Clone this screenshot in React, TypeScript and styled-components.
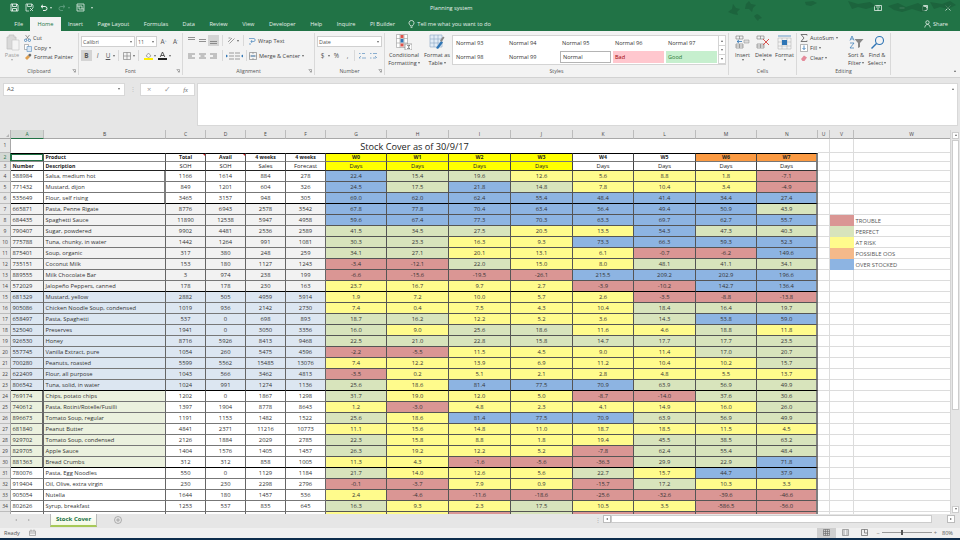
import React from "react";
import styled, { createGlobalStyle } from "styled-components";

const Global = createGlobalStyle`
  html, body { margin: 0; padding: 0; background: #e6e6e6; overflow: hidden; }
  body { font-family: "Open Sans", "Noto Sans", sans-serif; color: #333; }
  * { box-sizing: border-box; }
`;

const Page = styled.div`
  width: 960px; height: 540px; display: flex; flex-direction: column; overflow: hidden;
`;

/* ---------- title bar ---------- */
const TitleBar = styled.header`
  position: relative; height: 16px; background: #217346; color: #e8f2ec;
  display: grid; grid-template-columns: 430px 1fr auto; align-items: center;
  font-size: 5.6px;
`;
const Quick = styled.div`display: flex; align-items: center; gap: 6px; padding-left: 10px;`;
const WinBtns = styled.div`display: flex; align-items: center; gap: 17px; padding-right: 9px;`;
const Leaves = styled.svg`position: absolute; left: 720px; top: 0;`;
const Ic = styled.svg`display: block; flex: none;`;
const Caret = styled.span<{ $c?: string }>`
  display: inline-block; flex: none; width: 0; height: 0;
  border-left: 1.5px solid transparent; border-right: 1.5px solid transparent;
  border-top: 2px solid ${p => p.$c || "#666"};
`;

/* ---------- tabs ---------- */
const TabBar = styled.nav`
  height: 16px; background: #217346; color: #e4efe9; display: flex; align-items: stretch;
  padding-left: 7px; font-size: 5.6px;
`;
const Tab = styled.div<{ $on?: boolean }>`
  display: flex; align-items: center; padding: 0 7.25px; white-space: nowrap;
  ${p => p.$on ? "background:#f3f3f3;color:#217346;margin:1px 0 0 0;" : ""}
`;
const TellMe = styled.div`display: flex; align-items: center; gap: 2px; padding-left: 6px; white-space: nowrap;`;
const Share = styled.div`margin-left: auto; display: flex; align-items: center; gap: 2px; padding-right: 12px;`;

/* ---------- ribbon ---------- */
const Ribbon = styled.div`
  height: 47px; background: #f3f3f3; border-bottom: 1px solid #d2d2d2; display: flex; padding-top: 2px;
  font-size: 5.6px; color: #444;
`;
const Group = styled.section<{ $w: number }>`
  width: ${p => p.$w}px; flex: none; height: 42px; display: flex; flex-direction: column;
  border-right: 1px solid #d9d9d9;
`;
const GroupBody = styled.div<{ $pad?: number }>`
  flex: 1; display: flex; align-items: flex-start; min-height: 0; padding-left: ${p => p.$pad ?? 0}px;
`;
const GroupFoot = styled.div`
  height: 9px; display: grid; grid-template-columns: 8px 1fr 8px; align-items: center; justify-items: center;
  font-size: 5.2px; color: #555;
`;
const Launcher = () => (
  <Ic width="4" height="4" viewBox="0 0 4 4"><path d="M.5.5h3v3M1 1l2 2M3 1.800V3H1.800" fill="none" stroke="#888" strokeWidth=".6" /></Ic>
);
const Stack = styled.div<{ $gap?: number; $pad?: string }>`
  display: flex; flex-direction: column; gap: ${p => p.$gap ?? 2}px; padding: ${p => p.$pad || "0"};
`;
const Line = styled.div<{ $gap?: number }>`
  display: flex; align-items: center; gap: ${p => p.$gap ?? 2}px; white-space: nowrap;
`;
const Big = styled.div<{ $w: number; $fade?: boolean; $left?: number }>`
  width: ${p => p.$w}px; flex: none; display: flex; flex-direction: column; align-items: center;
  margin-left: ${p => p.$left ?? 0}px;
  line-height: 8px; text-align: center; white-space: nowrap; color: ${p => p.$fade ? "#999" : "#444"};
`;
const BigIcon = styled.div<{ $h: number }>`
  height: ${p => p.$h}px; display: flex; align-items: center; justify-content: center;
`;
const Select = styled.div<{ $w: number }>`
  width: ${p => p.$w}px; height: 11px; background: #fff; border: 1px solid #d0d0d0; display: flex;
  align-items: center; justify-content: space-between; padding: 0 2px 0 1px; color: #555; font-size: 5.4px;
`;
const ToolBtn = styled.div<{ $on?: boolean; $w?: number }>`
  width: ${p => p.$w ?? 10}px; height: 11px; flex: none; display: flex; align-items: center; justify-content: center;
  background: ${p => p.$on ? "#d4d4d4" : "transparent"}; font-size: 6.4px; color: #555;
`;
const Mini = styled.sup`font-size: 3.5px; color: #2f75b5;`;
const VSep = styled.div<{ $h?: number }>`width: 1px; height: ${p => p.$h ?? 11}px; background: #d9d9d9; flex: none;`;
const Gallery = styled.div`
  width: 274px; height: 30px; margin: 2px 0 0 0; flex: none; background: #fff; border: 1px solid #d4d4d4;
  display: grid; grid-template-columns: repeat(5, 53px) 1fr; grid-template-rows: 1fr 1fr; font-size: 5.6px; color: #333;
`;
const Style = styled.div<{ $kind?: string }>`
  margin: 1px 1px; display: flex; align-items: center; padding-left: 2px; white-space: nowrap;
  ${p => p.$kind === "bad" ? "background:#ffc7ce;color:#9c0006;" : ""}
  ${p => p.$kind === "good" ? "background:#c6efce;color:#2f7a34;" : ""}
  ${p => p.$kind === "sel" ? "border:1px solid #b4b4b4;" : ""}
`;
const GalleryScroll = styled.div`
  grid-column: 6; grid-row: 1 / 3; display: flex; flex-direction: column; border-left: 1px solid #d4d4d4;
`;
const ScrollCell = styled.div`flex: 1; display: flex; align-items: center; justify-content: center; border-bottom: 1px solid #d4d4d4;`;
const Collapse = styled.div`margin-left: auto; align-self: flex-end; padding: 0 4px 3px 0;`;

/* ---------- formula bar ---------- */
const FormulaBar = styled.div`
  height: 52px; background: #e6e6e6; display: flex; align-items: flex-start; padding: 5px 2px 0 3px; flex: none;
`;
const NameBox = styled.div`
  width: 122px; height: 13px; background: #fff; border: 1px solid #d8d8d8; display: flex; align-items: center;
  justify-content: space-between; padding: 0 4px 0 3px; font-size: 5.8px; color: #555;
`;
const Dots = styled.div`width: 15px; height: 13px; display: flex; align-items: center; justify-content: center; color:#bbb; font-size: 6px;`;
const FxBox = styled.div`
  width: 55px; height: 13px; background: #fff; border: 1px solid #d8d8d8; display: flex; align-items: center;
  justify-content: space-between; padding: 0 6px; color: #999; font-size: 7.5px;
`;
const Fx = styled.i`color: #666; font-size: 6.5px; font-family: "Liberation Serif", serif;`;
const Formula = styled.div`
  flex: 1; height: 43px; margin-left: 2px; background: #fff; border: 1px solid #d8d8d8; display: flex;
  justify-content: flex-end; padding: 4px 3px;
`;

/* ---------- sheet ---------- */
const SheetArea = styled.main`height: 384px; flex: none; display: flex; background: #fff;`;
const Grid = styled.div`
  width: 950px; height: 384px; overflow: hidden; display: grid; flex: none;
  grid-template-columns: 11px 33px 122px 40px 40px 40px 40px 61px 62px 62px 62px 61px 62px 61px 61px 12px 24px 116px;
  grid-template-rows: 9px 14px 9px 9px repeat(32, 11px);
  font-size: 5.8px; color: #333;
`;
const Corner = styled.div`background: #e6e6e6; border-right: 1px solid #b4b4b4; border-bottom: 1px solid #a8a8a8; display:flex; align-items:flex-end; justify-content:flex-end; padding: 1px;`;
const ColHead = styled.div<{ $on?: boolean }>`
  background: ${p => p.$on ? "#d3d8d4" : "#e6e6e6"}; color: ${p => p.$on ? "#217346" : "#444"};
  border-right: 1px solid #bcbcbc; border-bottom: ${p => p.$on ? "1.5px solid #217346" : "1px solid #a8a8a8"};
  display: flex; align-items: center; justify-content: center; font-size: 5px;
`;
const RowHead = styled.div<{ $on?: boolean }>`
  background: ${p => p.$on ? "#d3d8d4" : "#e6e6e6"}; color: ${p => p.$on ? "#217346" : "#444"};
  border-right: ${p => p.$on ? "1px solid #217346" : "1px solid #a8a8a8"}; border-bottom: 1px solid #bcbcbc;
  display: flex; align-items: center; justify-content: center; font-size: 5px;
`;
const TitleCell = styled.div`
  grid-column: span 14; background: #fff; display: flex; align-items: center; justify-content: center;
  font-size: 9.2px; color: #222; padding-top: 1px;
`;
const Blank = styled.div`background: #fff; border-right: 1px solid #dcdcdc; border-bottom: 1px solid #dcdcdc;`;
const HeadCell = styled.div<{ $top?: boolean; $bold?: boolean; $left?: boolean; $note?: boolean; $active?: boolean; $fill?: string }>`
  position: relative; background: ${p => p.$fill || "#fff"}; overflow: hidden; white-space: nowrap;
  display: flex; align-items: center; justify-content: ${p => p.$left ? "flex-start" : "center"};
  padding-left: ${p => p.$left ? "1.5px" : "0"}; font-weight: ${p => p.$bold ? 700 : 400};
  font-size: ${p => p.$bold ? "5.2px" : "5.8px"};
  color: #222; border-right: 1px solid #555;
  ${p => p.$top ? "border-top: 1px solid #000; border-bottom: 1px solid #888;" : "border-bottom: 1px solid #222;"}
  ${p => p.$active ? "box-shadow: inset 0 0 0 1px #217346;" : ""}
  ${p => p.$note ? "&::after{content:'';position:absolute;right:0;top:0;border-top:2px solid #d22;border-left:2px solid transparent;}" : ""}
`;
const Fill = (row: number, col: "id" | "num") => {
  if (row >= 7 && row <= 14) return "#f2f2f2";
  if (row >= 15 && row <= 23) return "#dce6f1";
  if (row >= 24 && row <= 30 && col === "id") return "#ebf1de";
  return "#fff";
};
const ends = (row: number) => [6, 14, 23, 30].includes(row);
const DataCell = styled.div<{ $fill: string; $end: boolean; $right?: string; $left?: boolean }>`
  background: ${p => p.$fill}; overflow: hidden; white-space: nowrap; display: flex; align-items: center;
  justify-content: ${p => p.$left ? "flex-start" : "center"}; padding-left: ${p => p.$left ? "1.5px" : "0"};
  border-right: ${p => p.$right || "1px solid #666"};
  border-bottom: 1px solid ${p => p.$end ? "#000" : "#777"};
`;
const tones: Record<string, string> = { R: "#da9694", G: "#d8e4bc", Y: "#fffb8c", B: "#8db4e2" };
const CoverCell = styled.div<{ $tone: string; $end: boolean; $last?: boolean }>`
  background: ${p => tones[p.$tone]}; display: flex; align-items: center; justify-content: center; white-space: nowrap;
  border-right: ${p => p.$last ? "2px solid #7f7f7f" : "1px solid #555"};
  border-bottom: 1px solid ${p => p.$end ? "#000" : "#555"};
`;
const WeekHead = styled.div<{ $fill: string; $top?: boolean; $last?: boolean }>`
  background: ${p => p.$fill}; display: flex; align-items: center; justify-content: center; color: #222;
  font-weight: ${p => p.$top ? 700 : 400};
  font-size: ${p => p.$top ? "5.2px" : "5.8px"};
  border-right: ${p => p.$last ? "2px solid #7f7f7f" : "1px solid #444"};
  ${p => p.$top ? "border-top: 1px solid #000; border-bottom: 1.5px solid #777;" : "border-bottom: 1px solid #333;"}
`;
const Swatch = styled(Blank)<{ $c: string }>`background: ${p => p.$c}; border-right: 0; border-bottom: 0;`;
const LegendLabel = styled(Blank)`display: flex; align-items: flex-end; padding-left: 1.5px; color: #555; white-space: nowrap;`;

/* ---------- v scroll ---------- */
const VScroll = styled.div`width: 10px; flex: none; background: #e6e6e6; display: flex; flex-direction: column; padding: 2px 1px 1px; border-left: 1px solid #d4d4d4;`;
const VArrow = styled.div`height: 7px; background: #fff; border: 1px solid #ccc; display: flex; align-items: center; justify-content: center; flex: none;`;
const VThumb = styled.div`height: 270px; background: #fff; border: 1px solid #ccc; margin-top: 1px; flex: none;`;
const Spacer = styled.div`flex: 1;`;
const UpArrow = styled(Caret)`transform: rotate(180deg);`;

/* ---------- sheet tabs ---------- */
const TabsBar = styled.div`
  height: 14.5px; background: #e6e6e6; flex: none; display: flex; align-items: flex-start; font-size: 6.4px;
`;
const NavArrows = styled.div`width: 50px; display: flex; justify-content: center; gap: 11px; align-items: center; height: 13px; padding-right: 6px; color: #aaa;`;
const SheetTab = styled.div`
  width: 47px; height: 13px; color: #217346; font-weight: 700; font-size: 6px; margin-top: 0;
  display: flex; align-items: center; justify-content: center; border-left: 1px solid #bbb; border-right: 1px solid #bbb;
  border-bottom: 2px solid #a7c957; background: linear-gradient(#fff, #f4f9e4);
`;
const Add = styled.div`width: 42px; height: 13px; display: flex; align-items: center; justify-content: center;`;
const Grip = styled.div`margin-left: auto; color: #aaa; width: 10px; height: 13px; line-height: 13px; font-size: 6px; text-align: center;`;
const HScroll = styled.div`
  width: 352px; height: 9px; margin: 1px 5px 0 0; display: flex; background: #e6e6e6;
`;
const HBtn = styled.div`width: 8px; height: 8px; background: #fff; border: 1px solid #bbb; display: flex; align-items: center; justify-content: center;`;
const HThumb = styled.div`flex: 1; height: 8px; background: #fff; border: 1px solid #ccc; margin-right: 15px;`;
const Sideways = styled(Caret)<{ $flip?: boolean }>`transform: rotate(${p => p.$flip ? 90 : -90}deg);`;

/* ---------- status ---------- */
const Status = styled.footer`
  height: 9.5px; background: #f0f0f0; flex: none; display: flex; align-items: center; padding-left: 4px; font-size: 5.6px; color: #555; gap: 9px;
`;
const ViewBtn = styled.div<{ $on?: boolean }>`
  width: 19px; height: 9.5px; display: flex; align-items: center; justify-content: center; background: ${p => p.$on ? "#cfcfcf" : "transparent"};
`;
const Views = styled.div`margin-left: auto; display: flex; align-items: center;`;
const ZoomBox = styled.div`display: flex; align-items: center; gap: 2px; margin: 0 5px 0 3px; color: #777;`;
const Track = styled.div`position: relative; width: 50px; height: 1px; background: #999;`;
const Knob = styled.div`position: absolute; left: 19px; top: -2px; width: 2px; height: 5px; background: #555;`;
const Percent = styled.span`padding-right: 7px;`;
const Task = styled.div`height: 2.5px; background: #0d2c4c; flex: none;`;

/* ---------- data ---------- */
const data = `588984|Salsa, medium hot|1166|1614|884|278|22.4 15.4 19.6 12.6 5.6 8.8 1.8 -7.1|BGGYYYYR
771432|Mustard, dijon|849|1201|604|326|24.5 17.5 21.8 14.8 7.8 10.4 3.4 -4.9|BGBGYYYR
535649|Flour, self rising|3465|3157|948|305|69.0 62.0 62.4 55.4 48.4 41.4 34.4 27.4|BBBBBBBB
665871|Pasta, Penne Rigate|8776|6943|2578|3542|67.8 77.8 70.4 63.4 56.4 49.4 50.9 43.9|BBBBBBBG
684435|Spaghetti Sauce|11890|12538|5947|4958|59.6 67.4 77.3 70.3 63.3 69.7 62.7 55.7|BBBBBBBB
790407|Sugar, powdered|9902|4481|2536|2589|41.5 34.5 27.5 20.5 13.5 54.3 47.3 40.3|GGGYYBGG
775788|Tuna, chunky, in water|1442|1264|991|1081|30.3 23.3 16.3 9.3 73.3 66.3 59.3 52.3|GGYYBBBB
875401|Soup, organic|317|380|248|259|34.1 27.1 20.1 13.1 6.1 -0.7 -6.2 149.6|GGYYYRRB
735151|Coconut Milk|153|180|1127|1243|-3.4 -12.1 22.0 15.0 8.0 48.1 41.1 34.1|RRGYYGGG
889555|Milk Chocolate Bar|3|974|238|199|-6.6 -15.6 -19.5 -26.1 215.5 209.2 202.9 196.6|RRRRBBBB
572029|Jalopeño Peppers, canned|178|178|230|163|23.7 16.7 9.7 2.7 -3.9 -10.2 142.7 136.4|YYYYRRBB
681329|Mustard, yellow|2882|505|4959|5914|1.9 7.2 10.0 5.7 2.6 -3.5 -8.8 -13.8|YYYYYRRR
905086|Chicken Noodle Soup, condensed|1019|936|2142|2730|7.4 0.4 7.5 4.3 10.4 18.4 16.4 19.7|YYYYYGGG
658497|Pasta, Spaghetti|537|0|698|893|18.7 16.2 12.2 5.2 3.6 14.3 53.8 59.0|GGYYYGBB
525040|Preserves|1941|0|3050|3356|16.0 9.0 25.6 18.6 11.6 4.6 18.8 11.8|GYGGYYGY
926530|Honey|8716|5926|8413|9468|22.5 21.0 22.8 15.8 14.7 17.7 17.7 23.5|GGGGGGGG
557745|Vanilla Extract, pure|1054|260|5475|4596|-2.2 -5.5 11.5 4.5 9.0 11.4 17.0 20.7|RRYYYYGG
700280|Peanuts, roasted|5599|5562|15485|13076|7.4 12.2 13.9 6.9 11.2 10.4 10.2 15.7|YYYYYYYG
622409|Flour, all purpose|1043|566|3462|4813|-3.5 0.2 5.1 2.1 2.8 4.8 5.5 13.7|RYYYYYYY
806542|Tuna, solid, in water|1024|991|1274|1136|25.6 18.6 81.4 77.5 70.9 63.9 56.9 49.9|GYBBBGGG
769174|Chips, potato chips|1202|0|1867|1298|31.7 19.0 12.0 5.0 -8.7 -14.0 37.6 30.6|GYYYRRGG
740612|Pasta, Rotini/Rotelle/Fusilli|1397|1904|8778|8643|1.2 -3.0 4.8 2.3 4.1 14.9 16.0 26.0|YRYYYYYG
896673|Tomato Soup, regular|1191|1153|1482|1522|25.6 18.6 81.4 77.5 70.9 63.9 56.9 49.9|GYBBBGGG
681840|Peanut Butter|4841|2371|11216|10773|11.1 15.6 14.8 11.0 18.7 18.5 11.5 4.5|YYYYYYYY
929702|Tomato Soup, condensed|2126|1884|2029|2785|22.3 15.8 8.8 1.8 19.4 45.5 38.5 63.2|GYYYYGGG
829705|Apple Sauce|1404|1576|1405|1457|26.3 19.2 12.2 5.2 -7.8 62.4 55.4 48.4|GYYYRGGG
881363|Bread Crumbs|312|312|858|1005|11.3 4.3 -1.6 -5.6 -36.3 29.9 22.9 71.8|YYRRRGGB
780076|Pasta, Egg Noodles|550|0|1129|1184|21.7 14.0 12.6 5.6 22.7 15.7 44.7 37.9|GYYYGYBB
919404|Oil, Olive, extra virgin|230|230|2298|2796|-0.1 -3.7 7.9 0.9 -15.7 17.2 10.3 3.3|RRYYRGYY
905054|Nutella|1644|180|1457|536|2.4 -4.6 -11.6 -18.6 -25.6 -32.6 -39.6 -46.6|YRRRRRRR
802626|Syrup, breakfast|1253|537|835|645|16.3 9.3 2.3 17.5 10.5 3.5 -586.5 -56.0|GYYGYYRR
||||||        |YYRGRRRR`.split("\n").map(l => l.split("|"));

const legend: Record<number, [string, string]> = {
  8: ["#da9694", "TROUBLE"], 9: ["#d8e4bc", "PERFECT"], 10: ["#fffb8c", "AT RISK"],
  11: ["#f4b98a", "POSSIBLE OOS"], 12: ["#8db4e2", "OVER STOCKED"],
};
const cols = ["A", "B", "C", "D", "E", "F", "G", "H", "I", "J", "K", "L", "M", "N", "U", "V", "W"];
const weeks = ["W0", "W1", "W2", "W3", "W4", "W5", "W6", "W7"];
const weekFill = (i: number) => (i < 4 ? "#ffff00" : i < 6 ? "#ffffff" : "#fb9a42");
const dayFill = (i: number) => (i < 4 ? "#ffff00" : "#ffffff");

function Trail() {
  return <><Blank /><Blank /><Blank /></>;
}

function SheetRows() {
  return (
    <>
      {data.map((d, i) => {
        const row = i + 4;
        const end = ends(row);
        const vals = d[6].trim() ? d[6].split(" ") : Array(8).fill("");
        const lg = legend[row];
        return (
          <React.Fragment key={row}>
            <RowHead>{row < 35 ? row : ""}</RowHead>
            <DataCell $left $fill={Fill(row, "id")} $end={end} $right={row >= 24 && row <= 30 ? "2px solid #666" : undefined}>{d[0]}</DataCell>
            <DataCell $left $fill={Fill(row, "id")} $end={end} $right={row <= 6 ? "2px solid #7f7f7f" : undefined}>{d[1]}</DataCell>
            {[2, 3, 4, 5].map(k => (
              <DataCell key={k} $fill={Fill(row, "num")} $end={end}>{d[k]}</DataCell>
            ))}
            {vals.map((v: string, k: number) => (
              <CoverCell key={k} $tone={d[7][k]} $end={end} $last={k === 7}>{v}</CoverCell>
            ))}
            <Blank />
            {lg ? <><Swatch $c={lg[0]} /><LegendLabel>{lg[1]}</LegendLabel></> : <><Blank /><Blank /></>}
          </React.Fragment>
        );
      })}
    </>
  );
}

export default function App() {
  return (
    <Page>
      <Global />
      <TitleBar>
        <Quick>
          <Ic width="9" height="9" viewBox="0 0 9 9"><path d="M1 1h6l1 1v6H1z M2.500 1v2.500h4V1 M2.500 8V5.500h4V8" fill="none" stroke="#fff" strokeWidth=".8" /></Ic>
          <Ic width="9" height="9" viewBox="0 0 9 9"><path d="M1 1h6l1 1v3M1 1v7h3M2.500 1v2.500h4V1M5 5l3 3M8 5L5 8" fill="none" stroke="#dfeee6" strokeWidth=".8" /></Ic>
          <Line $gap={2}>
            <Ic width="8" height="8" viewBox="0 0 8 8"><path d="M1 2.500h4a2 2 0 0 1 0 4H3M1 2.500L3 .8M1 2.500L3 4.200" fill="none" stroke="#fff" strokeWidth=".9" /></Ic>
            <Caret $c="#cfe3d8" />
          </Line>
          <Line $gap={2}>
            <Ic width="8" height="8" viewBox="0 0 8 8"><path d="M7 2.500H3a2 2 0 0 0 0 4h2M7 2.500L5 .8M7 2.500L5 4.200" fill="none" stroke="#5e9c7d" strokeWidth=".9" /></Ic>
            <Caret $c="#5e9c7d" />
          </Line>
          <Ic width="9" height="9" viewBox="0 0 9 9"><path d="M1 1h7v7H1z M3 3h3v3H3z M1 3h2M6 6h2" fill="none" stroke="#e0eee6" strokeWidth=".8" /></Ic>
          <Caret $c="#cfe3d8" />
        </Quick>
        <span>Planning system</span>
        <WinBtns>
          <Ic width="8" height="6" viewBox="0 0 8 6"><path d="M.5.5h7v5h-7zM4 .5v5M2 2h1M5 2h1" fill="none" stroke="#fff" strokeWidth=".7" /></Ic>
          <Ic width="6" height="6" viewBox="0 0 6 6"><path d="M.5 3h5" stroke="#fff" strokeWidth=".7" /></Ic>
          <Ic width="6" height="6" viewBox="0 0 6 6"><path d="M.5 1.500h4v4h-4zM1.500 1.500V.5h4v4h-1" fill="none" stroke="#fff" strokeWidth=".7" /></Ic>
          <Ic width="6" height="6" viewBox="0 0 6 6"><path d="M.5.5l5 5M5.500.5l-5 5" stroke="#fff" strokeWidth=".7" /></Ic>
        </WinBtns>
        <Leaves width="240" height="32" viewBox="0 0 240 32" fill="#1b5f3a" opacity=".75">
          <path d="M8 12l4-3 1-5 3 4 4 1-3 3 1 3-5-1z" />
          <path d="M26 4l3-3 2 3 5 1-3 3-1 4-3-3-4 0z" />
          <path d="M34 16l3-2 2 1 3 3-3 1-1 2-2-2z" />
          <path d="M85 2l8-1 4 2-6 3-5-1z" />
          <path d="M128 1l10 3 12-2 6 4-10 3-8-2-6 2z" />
          <path d="M168 6l10-3 8 4 12-4 10 6-6 3-10-3-10 3-8-2z" />
          <path d="M210 2l12 2 8-3 6 4-8 4-8-2-6 2z" />
        </Leaves>
      </TitleBar>
      <TabBar>
        <Tab>File</Tab>
        <Tab $on>Home</Tab>
        <Tab>Insert</Tab>
        <Tab>Page Layout</Tab>
        <Tab>Formulas</Tab>
        <Tab>Data</Tab>
        <Tab>Review</Tab>
        <Tab>View</Tab>
        <Tab>Developer</Tab>
        <Tab>Help</Tab>
        <Tab>Inquire</Tab>
        <Tab>PI Builder</Tab>
        <TellMe>
          <Ic width="7" height="8" viewBox="0 0 7 8"><path d="M3.500.5a2.500 2.500 0 0 1 1.200 4.700V6H2.300v-.8A2.500 2.500 0 0 1 3.500.5zM2.600 7.400h1.800" fill="none" stroke="#fff" strokeWidth=".7" /></Ic>
          Tell me what you want to do
        </TellMe>
        <Share>
          <Ic width="7" height="8" viewBox="0 0 7 8"><path d="M3.500.7a1.700 1.700 0 1 1 0 3.400 1.700 1.700 0 0 1 0-3.400zM.8 7.500c.3-2 1.300-3 2.700-3s2.400 1 2.700 3" fill="none" stroke="#fff" strokeWidth=".7" /></Ic>
          Share
        </Share>
      </TabBar>

      <Ribbon>
        <Group $w={79}>
          <GroupBody>
            <Big $w={24} $fade>
              <BigIcon $h={18}>
                <Ic width="15" height="17" viewBox="0 0 15 17"><path d="M2 3h2V1h5v2h2v12H2z" fill="#d9d9d9" stroke="#bdbdbd" strokeWidth=".7" /><path d="M7 6h7v10H7z" fill="#f4f4f4" stroke="#c8c8c8" strokeWidth=".7" /></Ic>
              </BigIcon>
              <span>Paste</span>
              <Caret $c="#aaa" />
            </Big>
            <Stack $gap={1.5} $pad="1px 0 0 0">
              <Line>
                <Ic width="7" height="8" viewBox="0 0 7 8"><path d="M1.500 1l3.500 4.500M5.500 1L2 5.500" stroke="#777" strokeWidth=".7" /><circle cx="1.600" cy="6.300" r="1.200" fill="none" stroke="#2f75b5" strokeWidth=".7" /><circle cx="5.400" cy="6.300" r="1.200" fill="none" stroke="#2f75b5" strokeWidth=".7" /></Ic>
                Cut
              </Line>
              <Line>
                <Ic width="8" height="8" viewBox="0 0 8 8"><path d="M.5.5h4v5h-4z" fill="#fff" stroke="#888" strokeWidth=".6" /><path d="M3 2.500h4.500v5H3z" fill="#dbe8f5" stroke="#5b8fbf" strokeWidth=".6" /></Ic>
                Copy <Caret />
              </Line>
              <Line>
                <Ic width="8" height="8" viewBox="0 0 8 8"><path d="M1 5l3-3 2 2-3 3z" fill="#e0a050" /><path d="M4 2l2-1.500L7.500 2 6 4z" fill="#666" /></Ic>
                Format Painter
              </Line>
            </Stack>
          </GroupBody>
          <GroupFoot><i /><span>Clipboard</span><Launcher /></GroupFoot>
        </Group>

        <Group $w={104}>
          <GroupBody>
            <Stack $gap={3} $pad="3px 0 0 2px">
              <Line $gap={1}>
                <Select $w={54}>Calibri<Caret /></Select>
                <Select $w={21}>11<Caret /></Select>
                <ToolBtn $w={11}>A<Mini>^</Mini></ToolBtn>
                <ToolBtn $w={11}>A<Mini>˅</Mini></ToolBtn>
              </Line>
              <Line $gap={0}>
                <ToolBtn $on $w={11}><b>B</b></ToolBtn>
                <ToolBtn $w={11}><i>I</i></ToolBtn>
                <ToolBtn $w={10}><u>U</u></ToolBtn>
                <Caret />
                <ToolBtn $w={6}><VSep /></ToolBtn>
                <ToolBtn $w={12}>
                  <Ic width="8" height="8" viewBox="0 0 8 8"><path d="M.5.5h7v7h-7zM4 .5v7M.5 4h7" fill="none" stroke="#777" strokeWidth=".6" /></Ic>
                </ToolBtn>
                <Caret />
                <ToolBtn $w={7}><VSep /></ToolBtn>
                <ToolBtn $w={12}>
                  <Ic width="9" height="9" viewBox="0 0 9 9"><path d="M2 5l2.500-3L7 5 4.500 6.500z" fill="#f4f4f4" stroke="#777" strokeWidth=".6" /><rect y="7" width="9" height="2" fill="#ffef00" /></Ic>
                </ToolBtn>
                <Caret />
                <ToolBtn $w={13}>
                  <Ic width="9" height="9" viewBox="0 0 9 9"><path d="M2.200 6L4.500 1l2.300 5M3 4.500h3" fill="none" stroke="#333" strokeWidth=".8" /><rect y="7" width="9" height="2" fill="#222" /></Ic>
                </ToolBtn>
                <Caret />
              </Line>
            </Stack>
          </GroupBody>
          <GroupFoot><i /><span>Font</span><Launcher /></GroupFoot>
        </Group>

        <Group $w={132}>
          <GroupBody>
            <Stack $gap={4} $pad="2px 0 0 3px">
              <Line $gap={0}>
                {["M1 1.500h7M1 3.500h7", "M1 3.500h7M1 5.500h7", "M1 5.500h7M1 7.500h7"].map((d, i) => (
                  <ToolBtn key={i} $on={i === 2} $w={11}><Ic width="9" height="9" viewBox="0 0 9 9"><path d={d} stroke="#777" strokeWidth=".8" /></Ic></ToolBtn>
                ))}
                <ToolBtn $w={6}><VSep /></ToolBtn>
                <ToolBtn $w={12}><Ic width="9" height="9" viewBox="0 0 9 9"><path d="M1 6l4-4M2.500 7.500l5-5M1.500 2h2" stroke="#777" strokeWidth=".7" /></Ic></ToolBtn>
                <Caret />
                <ToolBtn $w={9}><VSep /></ToolBtn>
                <Line $gap={2}>
                  <Ic width="8" height="9" viewBox="0 0 8 9"><path d="M1 2.500h5c1.500 0 1.500 3 0 3H3M4 4l-1 1.500L4 7M1 8h2" fill="none" stroke="#2f75b5" strokeWidth=".6" /></Ic>
                  Wrap Text
                </Line>
              </Line>
              <Line $gap={0}>
                {["M1 2h7M1 4h4M1 6h7", "M1 2h7M2.500 4h4M1 6h7", "M1 2h7M4 4h4M1 6h7"].map((d, i) => (
                  <ToolBtn key={i} $w={11}><Ic width="9" height="8" viewBox="0 0 9 8"><path d={d} stroke="#777" strokeWidth=".8" /></Ic></ToolBtn>
                ))}
                <ToolBtn $w={6}><VSep /></ToolBtn>
                <ToolBtn $w={9}><Ic width="8" height="8" viewBox="0 0 8 8"><path d="M3 1h5M3 4h5M3 7h5" stroke="#777" strokeWidth=".7" /><path d="M0 2.500l2 1.500-2 1.500z" fill="#2f75b5" /></Ic></ToolBtn>
                <ToolBtn $w={9}><Ic width="8" height="8" viewBox="0 0 8 8"><path d="M0 1h5M0 4h5M0 7h5" stroke="#777" strokeWidth=".7" /><path d="M8 2.500L6 4l2 1.500z" fill="#2f75b5" /></Ic></ToolBtn>
                <ToolBtn $w={6}><VSep /></ToolBtn>
                <Line $gap={2}>
                  <Ic width="8" height="8" viewBox="0 0 8 8"><path d="M.5.5h7v7h-7zM.5 4h7M4 .5V2M4 6v1.500" fill="none" stroke="#777" strokeWidth=".6" /><path d="M2 4h4" stroke="#2f75b5" strokeWidth=".8" /></Ic>
                  Merge &amp; Center
                  <Caret />
                </Line>
              </Line>
            </Stack>
          </GroupBody>
          <GroupFoot><i /><span>Alignment</span><Launcher /></GroupFoot>
        </Group>

        <Group $w={70}>
          <GroupBody>
            <Stack $gap={3} $pad="3px 0 0 2px">
              <Select $w={65}>Date<Caret /></Select>
              <Line $gap={0}>
                <ToolBtn $w={11}>$</ToolBtn><Caret />
                <ToolBtn $w={13}>%</ToolBtn>
                <ToolBtn $w={9}>,</ToolBtn>
                <ToolBtn $w={5}><VSep /></ToolBtn>
                <ToolBtn $w={11}><Ic width="9" height="8" viewBox="0 0 9 8"><path d="M1 1.500h1.500M4 1.500h3M4 6h4M1 6h1.500M3 4L1 6" stroke="#5b8fbf" strokeWidth=".7" /></Ic></ToolBtn>
                <ToolBtn $w={11}><Ic width="9" height="8" viewBox="0 0 9 8"><path d="M4 1.500h4M1 1.500h1.500M1 6h1.500M4 6h3M6 4l2 2" stroke="#5b8fbf" strokeWidth=".7" /></Ic></ToolBtn>
              </Line>
            </Stack>
          </GroupBody>
          <GroupFoot><i /><span>Number</span><Launcher /></GroupFoot>
        </Group>

        <Group $w={344}>
          <GroupBody $pad={1}>
            <Big $w={36}>
              <BigIcon $h={18}>
                <Ic width="16" height="16" viewBox="0 0 16 16"><path d="M.5.5h11v13H.5zM.5 4.500h11M.5 9h11M4 .5v13M8 .5v13" fill="#fff" stroke="#999" strokeWidth=".6" /><rect x="4.500" y="1" width="3" height="3" fill="#e0524a" /><rect x="4.500" y="5" width="3" height="3.500" fill="#2f75b5" /><rect x="4.500" y="9.500" width="3" height="3" fill="#e0524a" /><rect x="9" y="10" width="7" height="6" fill="#fff" stroke="#777" strokeWidth=".6" /><path d="M11 11.500h3l-2 1.500 2 1.500h-3" fill="none" stroke="#555" strokeWidth=".6" /></Ic>
              </BigIcon>
              <span>Conditional</span>
              <Line $gap={1}>Formatting<Caret /></Line>
            </Big>
            <Big $w={30}>
              <BigIcon $h={18}>
                <Ic width="16" height="16" viewBox="0 0 16 16"><path d="M1 1h12v12H1zM1 5h12M1 9h12M5 1v12M9 1v12" fill="#e2ecf6" stroke="#8aa6c4" strokeWidth=".6" /><path d="M7 14l5-7 2 1.500-5 6.500z" fill="#2f75b5" /><path d="M11 6.500l3-4 1.500 1-3 4.500z" fill="#888" /></Ic>
              </BigIcon>
              <span>Format as</span>
              <Line $gap={1}>Table<Caret /></Line>
            </Big>
            <Gallery>
              <Style>Normal 93</Style><Style>Normal 94</Style><Style>Normal 95</Style><Style>Normal 96</Style><Style>Normal 97</Style>
              <GalleryScroll>
                <ScrollCell><UpArrow /></ScrollCell>
                <ScrollCell><Caret /></ScrollCell>
                <ScrollCell><Caret /></ScrollCell>
              </GalleryScroll>
              <Style>Normal 98</Style><Style>Normal 99</Style><Style $kind="sel">Normal</Style><Style $kind="bad">Bad</Style><Style $kind="good">Good</Style>
            </Gallery>
          </GroupBody>
          <GroupFoot><i /><span>Styles</span><i /></GroupFoot>
        </Group>

        <Group $w={68}>
          <GroupBody>
            <Big $w={21} $left={3}>
              <BigIcon $h={18}><Ic width="15" height="14" viewBox="0 0 15 14"><path d="M1 1h7v3H1zM1 9h7v4H1zM1 11h7M4.500 9v4M4.500 1v3" fill="none" stroke="#777" strokeWidth=".6" /><path d="M9 5h5v3H9z" fill="#ddd" stroke="#888" strokeWidth=".5" /><path d="M7 6.500H2M4 5L2 6.500 4 8" fill="none" stroke="#2f75b5" strokeWidth=".8" /></Ic></BigIcon>
              <span>Insert</span><Caret />
            </Big>
            <Big $w={21}>
              <BigIcon $h={18}><Ic width="15" height="14" viewBox="0 0 15 14"><path d="M1 1h7v3H1zM1 9h7v4H1zM1 11h7M4.500 9v4M4.500 1v3" fill="none" stroke="#777" strokeWidth=".6" /><path d="M7 4l6 6M13 4l-6 6" stroke="#d9534f" strokeWidth="1" /></Ic></BigIcon>
              <span>Delete</span><Caret />
            </Big>
            <Big $w={21}>
              <BigIcon $h={18}><Ic width="15" height="15" viewBox="0 0 15 15"><path d="M1 3h13v11H1zM1 7h13M1 11h13M5 3v11M10 3v11" fill="none" stroke="#aaa" strokeWidth=".5" /><rect x="5" y="5" width="5" height="5" fill="#2f75b5" /><path d="M1 1h13" stroke="#2f75b5" strokeWidth=".7" /></Ic></BigIcon>
              <span>Format</span><Caret />
            </Big>
          </GroupBody>
          <GroupFoot><i /><span>Cells</span><i /></GroupFoot>
        </Group>

        <Group $w={94}>
          <GroupBody>
            <Stack $gap={2} $pad="1px 0 0 3px">
              <Line>
                <Ic width="8" height="8" viewBox="0 0 8 8"><path d="M7 1.500V.5H1l3 3.500-3 3.500h6v-1" fill="none" stroke="#555" strokeWidth=".8" /></Ic>
                AutoSum <Caret />
              </Line>
              <Line>
                <Ic width="8" height="8" viewBox="0 0 8 8"><path d="M.5.5h7v7h-7z" fill="#fff" stroke="#888" strokeWidth=".6" /><path d="M4 1.500v4M2.500 4L4 5.500 5.500 4" fill="none" stroke="#2f75b5" strokeWidth=".8" /></Ic>
                Fill <Caret />
              </Line>
              <Line>
                <Ic width="8" height="8" viewBox="0 0 8 8"><path d="M1 5l3-3.500L7 3.500 4.500 7H2.500z" fill="#e58a9a" /></Ic>
                Clear <Caret />
              </Line>
            </Stack>
            <Big $w={22} $left={7}>
              <BigIcon $h={18}>
                <Ic width="16" height="15" viewBox="0 0 16 15"><path d="M2 5.500L4 1l2 4.500M2.700 4h2.600M2 8h4l-4 5h4" fill="none" stroke="#2f75b5" strokeWidth=".7" /><path d="M6.500 4h9l-3.500 4v4l-2 1V8z" fill="#888" /></Ic>
              </BigIcon>
              <span>Sort &amp;</span>
              <Line $gap={1}>Filter<Caret /></Line>
            </Big>
            <Big $w={20}>
              <BigIcon $h={18}>
                <Ic width="15" height="15" viewBox="0 0 15 15"><circle cx="9.500" cy="5.500" r="4" fill="none" stroke="#2f75b5" strokeWidth="1.100" /><path d="M6.500 8.500L1.500 13.500" stroke="#2f75b5" strokeWidth="1.400" /></Ic>
              </BigIcon>
              <span>Find &amp;</span>
              <Line $gap={1}>Select<Caret /></Line>
            </Big>
          </GroupBody>
          <GroupFoot><i /><span>Editing</span><i /></GroupFoot>
        </Group>
        <Collapse><UpArrow /></Collapse>
      </Ribbon>

      <FormulaBar>
        <NameBox>A2<Caret /></NameBox>
        <Dots>⋮</Dots>
        <FxBox>
          <span>×</span><span>✓</span><Fx>fx</Fx>
        </FxBox>
        <Formula><UpArrow /></Formula>
      </FormulaBar>

      <SheetArea>
        <Grid>
          <Corner><Ic width="3" height="3" viewBox="0 0 3 3"><path d="M3 0v3H0z" fill="#b4b4b4" /></Ic></Corner>
          {cols.map(c => <ColHead key={c} $on={c === "A"}>{c}</ColHead>)}

          <RowHead>1</RowHead>
          <TitleCell>Stock Cover as of 30/9/17</TitleCell>
          <Trail />

          <RowHead $on>2</RowHead>
          <HeadCell $top $active />
          <HeadCell $top $left $bold>Product</HeadCell>
          <HeadCell $top $bold $note>Total</HeadCell>
          <HeadCell $top $bold $note>Avail</HeadCell>
          <HeadCell $top $bold>4 weeks</HeadCell>
          <HeadCell $top $bold>4 weeks</HeadCell>
          {weeks.map((w, i) => <WeekHead key={w} $top $fill={weekFill(i)} $last={i === 7}>{w}</WeekHead>)}
          <Trail />

          <RowHead>3</RowHead>
          <HeadCell $left $bold>Number</HeadCell>
          <HeadCell $left $bold>Description</HeadCell>
          <HeadCell>SOH</HeadCell>
          <HeadCell>SOH</HeadCell>
          <HeadCell>Sales</HeadCell>
          <HeadCell>Forecast</HeadCell>
          {weeks.map((w, i) => <WeekHead key={w} $fill={dayFill(i)} $last={i === 7}>Days</WeekHead>)}
          <Trail />

          <SheetRows />
        </Grid>
        <VScroll>
          <VArrow><UpArrow /></VArrow>
          <VThumb />
          <Spacer />
          <VArrow><Caret /></VArrow>
        </VScroll>
      </SheetArea>

      <TabsBar>
        <NavArrows><Sideways $flip $c="#aaa" /><Sideways $c="#aaa" /></NavArrows>
        <SheetTab>Stock Cover</SheetTab>
        <Add>
          <Ic width="8" height="8" viewBox="0 0 8 8"><circle cx="4" cy="4" r="3.500" fill="none" stroke="#888" strokeWidth=".6" /><path d="M4 2v4M2 4h4" stroke="#888" strokeWidth=".6" /></Ic>
        </Add>
        <Grip>⋮</Grip>
        <HScroll>
          <HBtn><Sideways $flip /></HBtn>
          <HThumb />
          <HBtn><Sideways /></HBtn>
        </HScroll>
      </TabsBar>
      <Status>
        <span>Ready</span>
        <Ic width="7" height="7" viewBox="0 0 7 7"><path d="M.5 2h6v4.500h-6zM2 .5v2M5 .5v2M.5 4h6" fill="none" stroke="#888" strokeWidth=".6" /></Ic>
        <Views>
          <ViewBtn $on><Ic width="7" height="7" viewBox="0 0 7 7"><path d="M.5.5h6v6h-6zM.5 2.500h6M.5 4.500h6M2.500.5v6M4.500.5v6" fill="none" stroke="#666" strokeWidth=".6" /></Ic></ViewBtn>
          <ViewBtn><Ic width="7" height="7" viewBox="0 0 7 7"><path d="M.5.5h6v6h-6zM2 .5v6M5 .5v6" fill="none" stroke="#888" strokeWidth=".7" /></Ic></ViewBtn>
          <ViewBtn><Ic width="7" height="7" viewBox="0 0 7 7"><path d="M.5.5h6v6h-6zM3.500.5v3.500h3" fill="none" stroke="#666" strokeWidth=".7" /></Ic></ViewBtn>
          <ZoomBox>
            −
            <Track><Knob /></Track>
            +
          </ZoomBox>
          <Percent>80%</Percent>
        </Views>
      </Status>
      <Task />
    </Page>
  );
}
